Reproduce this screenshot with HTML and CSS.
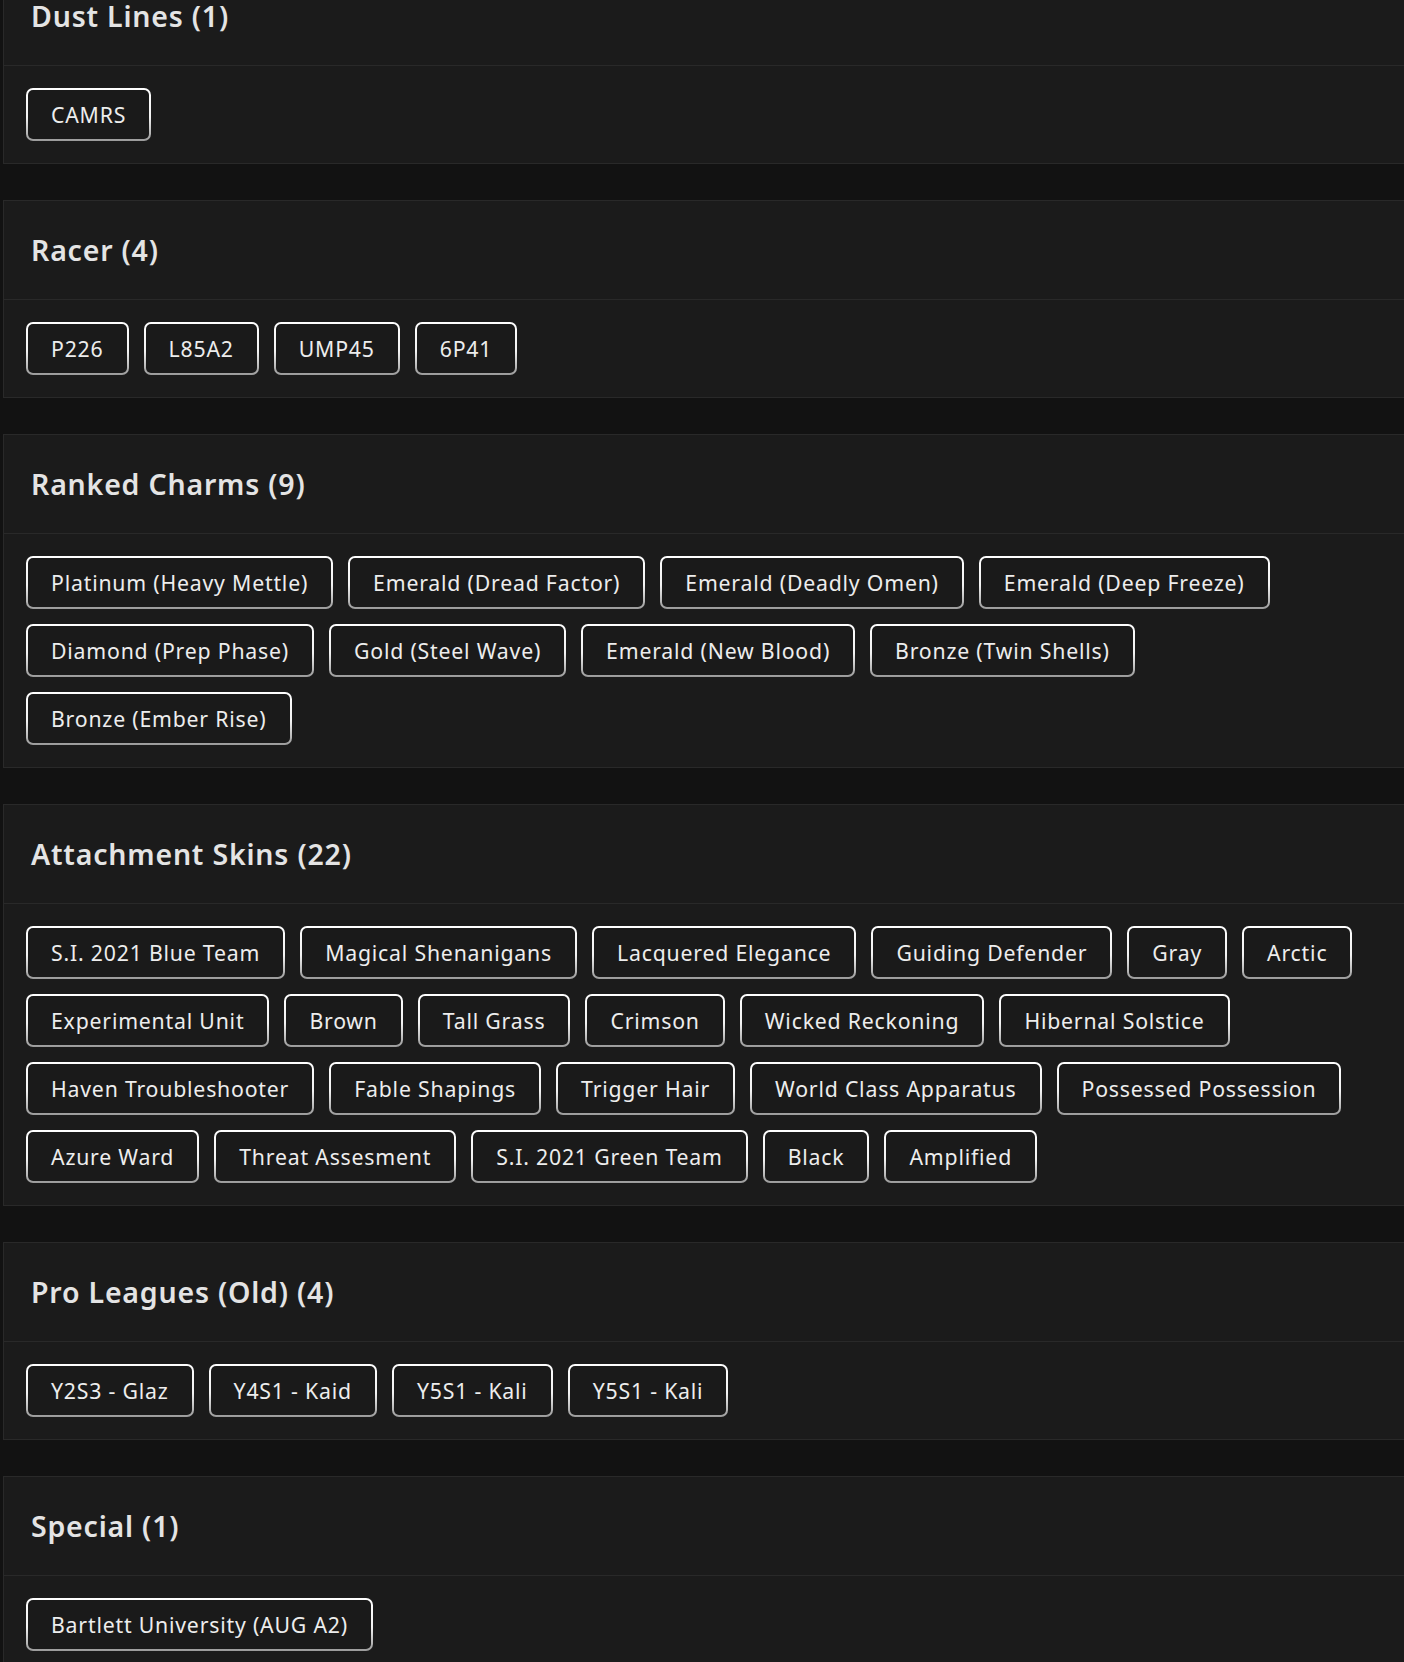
FILE: index.html
```html
<!DOCTYPE html>
<html lang="en">
<head>
<meta charset="utf-8">
<title>Collection</title>
<link rel="stylesheet" href="styles.css">
</head>
<body>
<main class="list">
  <section class="card">
    <header class="card-header"><h2 class="card-title">Dust Lines (1)</h2></header>
    <div class="card-body">
      <button class="chip">CAMRS</button>
    </div>
  </section>

  <section class="card">
    <header class="card-header"><h2 class="card-title">Racer (4)</h2></header>
    <div class="card-body">
      <button class="chip">P226</button>
      <button class="chip">L85A2</button>
      <button class="chip">UMP45</button>
      <button class="chip">6P41</button>
    </div>
  </section>

  <section class="card">
    <header class="card-header"><h2 class="card-title">Ranked Charms (9)</h2></header>
    <div class="card-body">
      <button class="chip">Platinum (Heavy Mettle)</button>
      <button class="chip">Emerald (Dread Factor)</button>
      <button class="chip">Emerald (Deadly Omen)</button>
      <button class="chip">Emerald (Deep Freeze)</button>
      <button class="chip">Diamond (Prep Phase)</button>
      <button class="chip">Gold (Steel Wave)</button>
      <button class="chip">Emerald (New Blood)</button>
      <button class="chip">Bronze (Twin Shells)</button>
      <button class="chip">Bronze (Ember Rise)</button>
    </div>
  </section>

  <section class="card">
    <header class="card-header"><h2 class="card-title">Attachment Skins (22)</h2></header>
    <div class="card-body">
      <button class="chip">S.I. 2021 Blue Team</button>
      <button class="chip">Magical Shenanigans</button>
      <button class="chip">Lacquered Elegance</button>
      <button class="chip">Guiding Defender</button>
      <button class="chip">Gray</button>
      <button class="chip">Arctic</button>
      <button class="chip">Experimental Unit</button>
      <button class="chip">Brown</button>
      <button class="chip">Tall Grass</button>
      <button class="chip">Crimson</button>
      <button class="chip">Wicked Reckoning</button>
      <button class="chip">Hibernal Solstice</button>
      <button class="chip">Haven Troubleshooter</button>
      <button class="chip">Fable Shapings</button>
      <button class="chip">Trigger Hair</button>
      <button class="chip">World Class Apparatus</button>
      <button class="chip">Possessed Possession</button>
      <button class="chip">Azure Ward</button>
      <button class="chip">Threat Assesment</button>
      <button class="chip">S.I. 2021 Green Team</button>
      <button class="chip">Black</button>
      <button class="chip">Amplified</button>
    </div>
  </section>

  <section class="card">
    <header class="card-header"><h2 class="card-title">Pro Leagues (Old) (4)</h2></header>
    <div class="card-body">
      <button class="chip">Y2S3 - Glaz</button>
      <button class="chip">Y4S1 - Kaid</button>
      <button class="chip">Y5S1 - Kali</button>
      <button class="chip">Y5S1 - Kali</button>
    </div>
  </section>

  <section class="card">
    <header class="card-header"><h2 class="card-title">Special (1)</h2></header>
    <div class="card-body">
      <button class="chip">Bartlett University (AUG A2)</button>
    </div>
  </section>
</main>
</body>
</html>
```

FILE: styles.css
```css
html, body {
  margin: 0;
  padding: 0;
  background: #121212;
  overflow: hidden;
}

body {
  font-family: "Noto Sans", "Open Sans", sans-serif;
  color: #e6e6e6;
}

.list {
  margin: -34px 0 0 3px;
  width: 1415px;
}

.card {
  background: #1b1b1b;
  border: 1px solid #292929;
  margin-bottom: 36px;
}

.card-header {
  height: 98px;
  padding: 0 27px;
  display: flex;
  align-items: center;
  border-bottom: 1px solid #292929;
}

.card-title {
  margin: 0;
  font-size: 28.5px;
  font-weight: 600;
  letter-spacing: 0.8px;
  color: #e4e4e4;
  line-height: 1;
}

.card-body {
  padding: 22px;
  display: flex;
  flex-wrap: wrap;
  gap: 15px;
}

.chip {
  height: 53px;
  padding: 0 23px;
  font-family: inherit;
  font-size: 21.25px;
  font-weight: 400;
  letter-spacing: 0.8px;
  color: #ededed;
  border: 2px solid transparent;
  border-radius: 7px;
  background:
    linear-gradient(#1a1a1a, #1a1a1a) padding-box,
    linear-gradient(#ffffff 0%, #f2f2f2 55%, #9a9a9a 100%) border-box;
  cursor: pointer;
}
```
